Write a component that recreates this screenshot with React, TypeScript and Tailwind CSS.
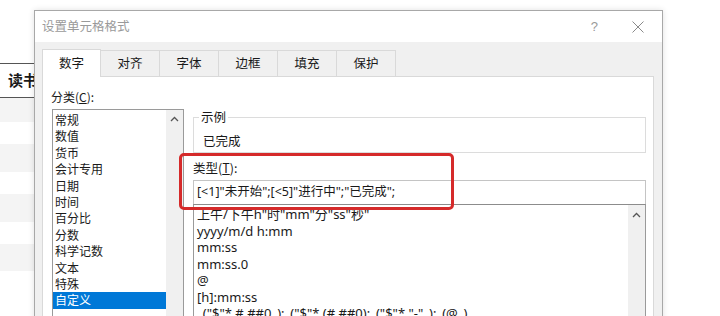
const categories = ["常规", "数值", "货币", "会计专用", "日期", "时间", "百分比", "分数", "科学记数", "文本", "特殊", "自定义"];

const formats = [
	"上午/下午h\"时\"mm\"分\"ss\"秒\"",
	"yyyy/m/d h:mm",
	"mm:ss",
	"mm:ss.0",
	"@",
	"[h]:mm:ss",
	"_(\"$\"* #,##0_);_(\"$\"* (#,##0);_(\"$\"* \"-\"_);_(@_)",
];

const tabs = ["数字", "对齐", "字体", "边框", "填充", "保护"];

function UpArrow() {
	return (
		<svg width="9" height="6" viewBox="0 0 9 6" className="block">
			<path d="M1 5 L4.5 1.5 L8 5" fill="none" stroke="#555" strokeWidth="1.3" />
		</svg>
	);
}

export default function App() {
	return (
		<div className="relative w-[720px] h-[316px] overflow-hidden bg-white text-[#1a1a1a] font-['Noto_Sans','Noto_Sans_CJK_SC',sans-serif]">
			{/* spreadsheet behind the dialog */}
			<div className="pt-[63px] w-[40px]">
				<div className="h-[35px] border-y border-[#555] flex items-center pl-[8px] text-[15px] font-bold font-['Noto_Sans_CJK_SC',sans-serif]">读书</div>
				<div className="h-[24px] bg-[#f4f4f4]"></div>
				<div className="h-[22px]"></div>
				<div className="h-[28px] bg-[#f4f4f4]"></div>
				<div className="h-[22px]"></div>
				<div className="h-[28px] bg-[#f4f4f4]"></div>
				<div className="h-[22px]"></div>
				<div className="h-[27px] bg-[#f4f4f4]"></div>
				<div className="h-[24px]"></div>
			</div>

			{/* dialog window */}
			<div className="absolute left-[34px] top-[10px] w-[629px] h-[330px] border border-[#a8a8a8] bg-[#f0f0f0] shadow-[0_0_6px_rgba(0,0,0,0.12)] font-['Noto_Sans_CJK_SC',sans-serif] text-[12px]">
				<div className="h-[31px] bg-white flex items-center pl-[7px] pr-[18px]">
					<span className="text-[#9a9a9a] text-[12.5px]">设置单元格格式</span>
					<span className="ml-auto text-[#9a9a9a] text-[13px] font-['Liberation_Sans',sans-serif]">?</span>
					<svg width="12" height="12" viewBox="0 0 12 12" className="ml-[34px]">
						<path d="M0.5 0.5 L11.5 11.5 M11.5 0.5 L0.5 11.5" stroke="#8a8a8a" strokeWidth="1" />
					</svg>
				</div>

				<div className="pl-[7px] pt-[7px]">
					<div className="flex h-[28px] relative z-10">
						{tabs.map((t, i) => (
							<div
								key={t}
								className={
									i === 0
										? "w-[59px] h-[28px] bg-white border border-b-0 border-[#d9d9d9] flex items-center justify-center text-[12.5px]"
										: "w-[59px] h-[27px] mt-[1px] bg-[#f0f0f0] border border-l-0 border-[#d9d9d9] flex items-center justify-center text-[12.5px]"
								}
							>
								{t}
							</div>
						))}
					</div>

					<div className="-mt-px w-[612px] h-[260px] bg-white border border-[#d9d9d9] flex pt-[12px] pl-[9px]">
						{/* category column */}
						<div className="w-[132px] flex flex-col">
							<div className="h-[16px] leading-[16px] -ml-[1px]">分类(<span className="underline">C</span>):</div>
							<div className="mt-[4px] h-[240px] border border-[#9a9a9a] flex">
								<div className="flex-1 pt-[2px]">
									{categories.map((c) => (
										<div
											key={c}
											className={
												c === "自定义"
													? "h-[16.4px] leading-[16.4px] pl-[2px] bg-[#0078d7] text-white"
													: "h-[16.4px] leading-[16.4px] pl-[2px]"
											}
										>
											{c}
										</div>
									))}
								</div>
								<div className="w-[17px] bg-[#f0f0f0] flex justify-center pt-[6px]">
									<UpArrow />
								</div>
							</div>
						</div>

						{/* right column */}
						<div className="ml-[9px] w-[453px] pt-[20px] flex flex-col">
							<fieldset className="h-[47px] border border-[#dcdcdc] px-[9px]">
								<legend className="ml-[-4px] px-[2px] leading-[16px] text-[12.5px]">示例</legend>
								<div className="mt-[8px] leading-[16px] text-[12.5px]">已完成</div>
							</fieldset>
							<div className="mt-[7px] h-[16px] leading-[16px] text-[12.5px]">类型(<span className="underline">T</span>):</div>
							<div className="mt-[4px] h-[26px] border border-b-0 border-[#c4c4c4] flex items-center pl-[3px] text-[12.5px] font-['Noto_Sans','Noto_Sans_CJK_SC',sans-serif]">
								[&lt;1]"未开始";[&lt;5]"进行中";"已完成";
							</div>
							<div className="h-[140px] border border-[#9a9a9a] border-t-[#8c8c8c] flex">
								<div className="flex-1 pl-[3px] pt-[1px] text-[13px] font-['Noto_Sans','Noto_Sans_CJK_SC',sans-serif]">
									{formats.map((f) => (
										<div key={f} className="h-[16.5px] leading-[16.5px] whitespace-pre">{f}</div>
									))}
								</div>
								<div className="w-[17px] bg-[#f0f0f0] flex justify-center pt-[7px]">
									<UpArrow />
								</div>
							</div>
						</div>
					</div>
				</div>
			</div>

			{/* red highlight */}
			<div className="absolute left-[179px] top-[153px] w-[275px] h-[57px] border-[3px] border-[#d52a2a] rounded-[5px]"></div>
		</div>
	);
}
